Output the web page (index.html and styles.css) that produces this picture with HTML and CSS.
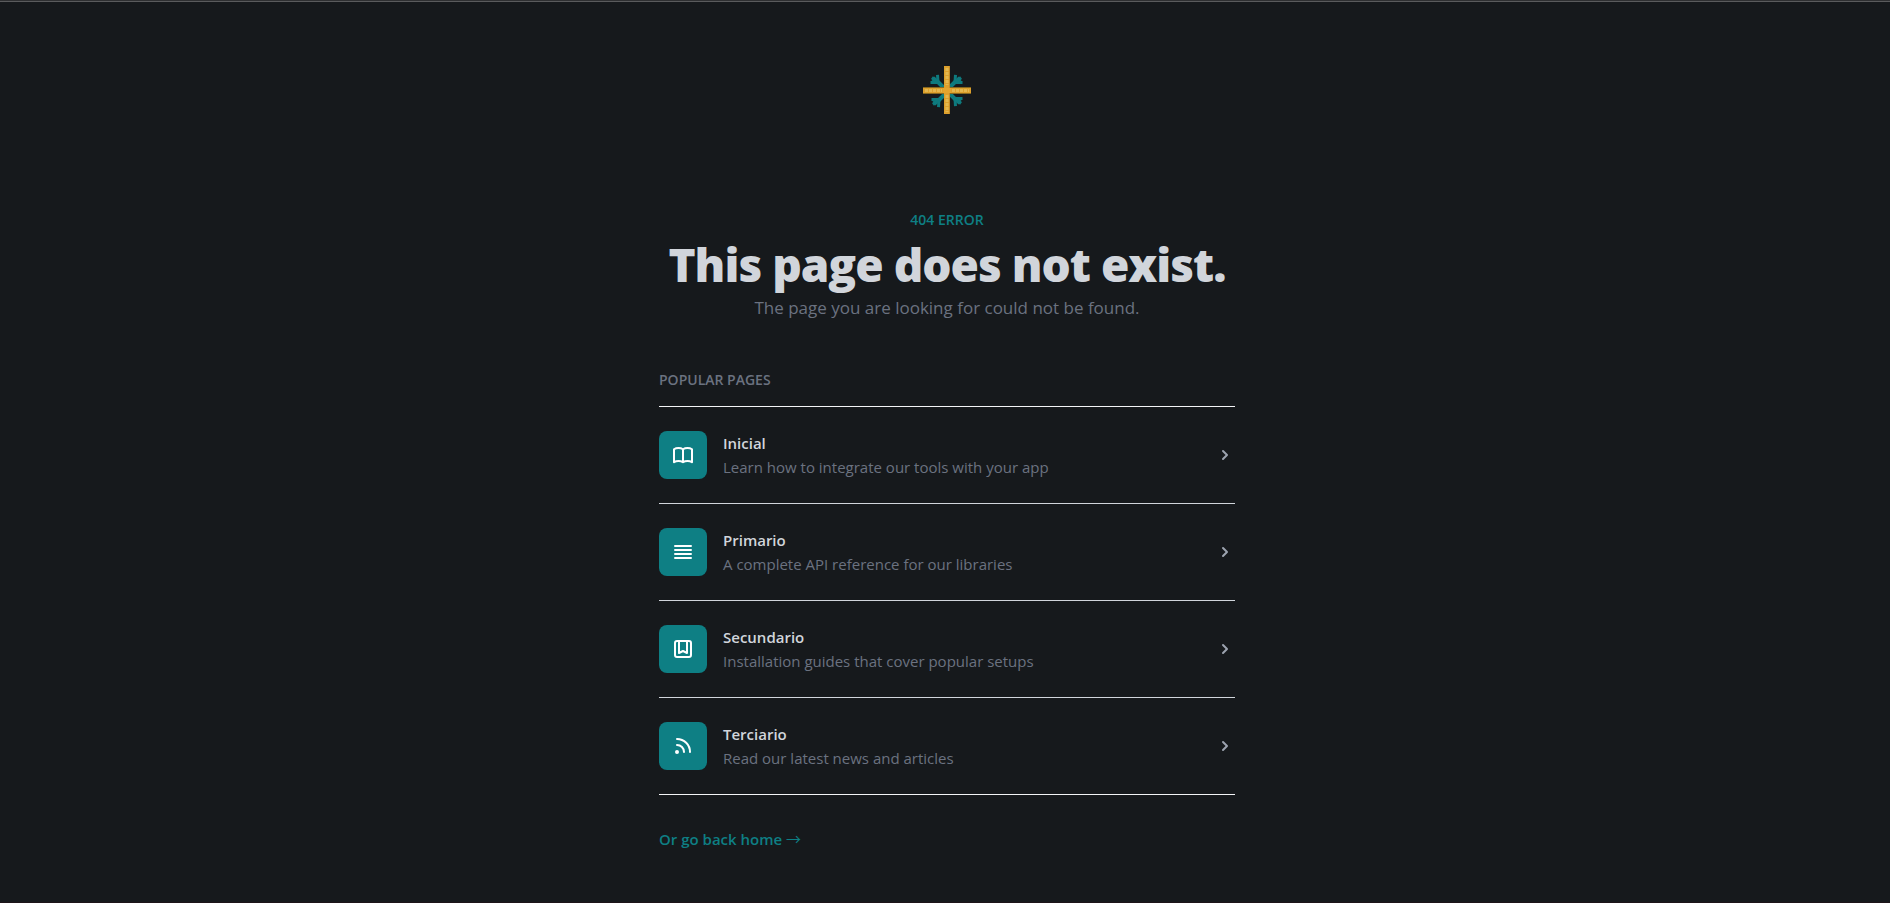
FILE: index.html
```html
<!DOCTYPE html>
<html lang="en">
<head>
<meta charset="utf-8">
<title>404 – This page does not exist</title>
<meta name="viewport" content="width=device-width, initial-scale=1">
<link rel="stylesheet" href="styles.css">
</head>
<body>
<main class="page">
  <div class="brand">
    <svg class="logo" viewBox="0 0 48 48" role="img" aria-label="Logo">
      <g fill="none" stroke="#0e7a7e">
        <g id="arm"><path d="M24 25L13.500 14.500" stroke-width="4"/><path d="M15 16.500L7.500 16.500M15 16L14.500 8.800M14 15.500L9 11.500" stroke-width="3"/><path d="M9.500 15L12.500 11.500" stroke-width="3"/></g>
        <use href="#arm" transform="matrix(-1 0 0 1 47 0)"/>
        <use href="#arm" transform="matrix(1 0 0 -1 1 50)"/>
        <use href="#arm" transform="matrix(-1 0 0 -1 47 49)"/>
      </g>
      <path fill="#87681f" d="M0 21h48v7H0z"/>
      <path fill="#dda02c" d="M0 22h48v5H0zM21 0h6v48h-6z"/>
      <path fill="#c08a28" d="M26 0h1v48h-1z"/>
      <path fill="#e3a52f" d="M20 22h8v5h-8z"/>
      <path fill="none" stroke="#e3b74f" stroke-width="3" stroke-dasharray="3 1" d="M2 24.500h17M29 24.500h17M24 2v17M24 29v17"/>
    </svg>
  </div>

  <header class="intro">
    <p class="eyebrow">404 error</p>
    <h1 class="title">This page does not exist.</h1>
    <p class="lead">The page you are looking for could not be found.</p>
  </header>

  <section class="popular" aria-labelledby="popular-title">
    <h2 class="eyebrow eyebrow-muted" id="popular-title">Popular pages</h2>
    <ul class="links">
      <li class="item">
        <span class="tile"><svg class="icon" viewBox="0 0 24 24" aria-hidden="true"><path d="M12 6.253v13m0-13C10.832 5.477 9.246 5 7.500 5S4.168 5.477 3 6.253v13C4.168 18.477 5.754 18 7.500 18s3.332.477 4.500 1.253m0-13C13.168 5.477 14.754 5 16.500 5c1.747 0 3.332.477 4.500 1.253v13C19.832 18.477 18.247 18 16.500 18c-1.746 0-3.332.477-4.500 1.253"/></svg></span>
        <div class="text"><h3 class="name"><a href="#">Inicial</a></h3><p class="about">Learn how to integrate our tools with your app</p></div>
        <svg class="chevron" viewBox="0 0 20 20" aria-hidden="true"><path fill-rule="evenodd" clip-rule="evenodd" d="M7.293 14.707a1 1 0 010-1.414L10.586 10 7.293 6.707a1 1 0 011.414-1.414l4 4a1 1 0 010 1.414l-4 4a1 1 0 01-1.414 0z"/></svg>
      </li>
      <li class="item">
        <span class="tile"><svg class="icon" viewBox="0 0 24 24" aria-hidden="true"><path d="M4 6h16M4 10h16M4 14h16M4 18h16"/></svg></span>
        <div class="text"><h3 class="name"><a href="#">Primario</a></h3><p class="about">A complete API reference for our libraries</p></div>
        <svg class="chevron" viewBox="0 0 20 20" aria-hidden="true"><path fill-rule="evenodd" clip-rule="evenodd" d="M7.293 14.707a1 1 0 010-1.414L10.586 10 7.293 6.707a1 1 0 011.414-1.414l4 4a1 1 0 010 1.414l-4 4a1 1 0 01-1.414 0z"/></svg>
      </li>
      <li class="item">
        <span class="tile"><svg class="icon" viewBox="0 0 24 24" aria-hidden="true"><path d="M16 4v12l-4-2-4 2V4M6 20h12a2 2 0 002-2V6a2 2 0 00-2-2H6a2 2 0 00-2 2v12a2 2 0 002 2z"/></svg></span>
        <div class="text"><h3 class="name"><a href="#">Secundario</a></h3><p class="about">Installation guides that cover popular setups</p></div>
        <svg class="chevron" viewBox="0 0 20 20" aria-hidden="true"><path fill-rule="evenodd" clip-rule="evenodd" d="M7.293 14.707a1 1 0 010-1.414L10.586 10 7.293 6.707a1 1 0 011.414-1.414l4 4a1 1 0 010 1.414l-4 4a1 1 0 01-1.414 0z"/></svg>
      </li>
      <li class="item">
        <span class="tile"><svg class="icon" viewBox="0 0 24 24" aria-hidden="true"><path d="M6 5c7.180 0 13 5.820 13 13M6 11a7 7 0 017 7m-6 0a1 1 0 11-2 0 1 1 0 012 0z"/></svg></span>
        <div class="text"><h3 class="name"><a href="#">Terciario</a></h3><p class="about">Read our latest news and articles</p></div>
        <svg class="chevron" viewBox="0 0 20 20" aria-hidden="true"><path fill-rule="evenodd" clip-rule="evenodd" d="M7.293 14.707a1 1 0 010-1.414L10.586 10 7.293 6.707a1 1 0 011.414-1.414l4 4a1 1 0 010 1.414l-4 4a1 1 0 01-1.414 0z"/></svg>
      </li>
    </ul>
    <a class="home" href="#">Or go back home <span class="arrow" aria-hidden="true">→</span></a>
  </section>
</main>
</body>
</html>
```
FILE: styles.css
```css
* { box-sizing: border-box; margin: 0; padding: 0; }

body {
  min-height: 100vh;
  background: #16191c;
  color: #d1d5db;
  font-family: "Segoe UI", "Open Sans", "Noto Sans", sans-serif;
  font-size: 15px;
  line-height: 24px;
  border-top: 1px solid #2e2f31;
  border-bottom: 1px solid #1d1419;
}

a { color: inherit; text-decoration: none; }

.page {
  border-top: 1px solid #5a5b5d;
  padding: 64px 0 48px 4px;
}

.brand { display: flex; justify-content: center; }
.logo { width: 48px; height: 48px; }

.intro { margin-top: 96px; text-align: center; }

.eyebrow {
  color: #0e7f84;
  font-size: 14px;
  font-weight: 600;
  line-height: 20px;
  text-transform: uppercase;
}
.eyebrow-muted { color: #6b7280; }

.title {
  margin-top: 10px;
  font-size: 46px;
  font-weight: 800;
  line-height: 48px;
  letter-spacing: -1px;
}

.lead {
  margin-top: 6px;
  color: #6b7280;
  font-size: 17px;
  line-height: 28px;
}

.popular { max-width: 576px; margin: 48px auto 0; }

.links {
  margin: 16px 0 32px;
  list-style: none;
  border-top: 1px solid #f3f4f6;
  border-bottom: 1px solid #f3f4f6;
}

.item {
  display: flex;
  align-items: center;
  gap: 16px;
  padding: 24px 0;
}
.item + .item { border-top: 1px solid #d1d5db; }

.tile {
  display: flex;
  align-items: center;
  justify-content: center;
  width: 48px;
  height: 48px;
  border-radius: 8px;
  background: #0e7f84;
}

.icon {
  width: 24px;
  height: 24px;
  fill: none;
  stroke: #fff;
  stroke-width: 2;
  stroke-linecap: round;
  stroke-linejoin: round;
}

.text { flex: 1; min-width: 0; }
.name { font-size: 15px; font-weight: 600; }
.about { color: #6b7280; }

.chevron { width: 20px; height: 20px; fill: #9ca3af; }

.home { color: #0e7f84; font-weight: 600; }
.arrow { font-family: "Noto Sans CJK JP", sans-serif; font-weight: 400; line-height: 1; }
```
